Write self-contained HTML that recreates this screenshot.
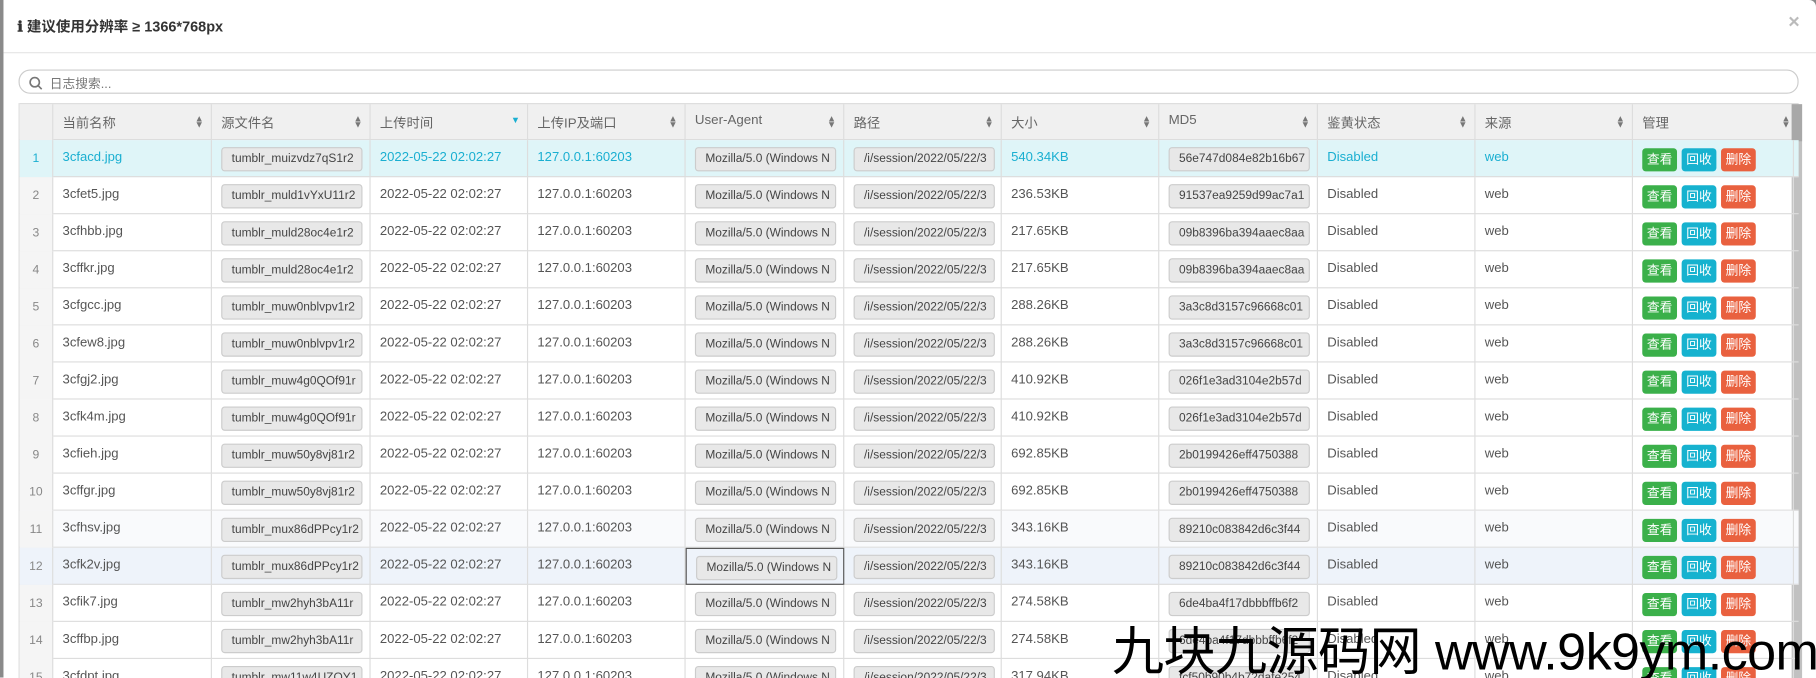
<!DOCTYPE html>
<html><head><meta charset="utf-8">
<style>
*{box-sizing:border-box;margin:0;padding:0}
html,body{width:1816px;height:678px;overflow:hidden;background:#fff}
#w{width:1568px;height:585px;transform:scale(1.15816);transform-origin:0 0;position:relative;font-family:"Liberation Sans","Noto Sans CJK SC",sans-serif;font-size:11.3px;color:#555;background:#8a8a8a}
#m{position:absolute;left:3px;top:0;width:1565px;height:600px;background:#fff;border-radius:0 6px 0 0}
#t{position:absolute;left:12px;top:12px;font-size:12.5px;font-weight:bold;color:#333}
#x{position:absolute;right:14px;top:9px;font-size:17px;color:#bbb;font-weight:bold}
#hr{position:absolute;left:0;right:0;top:45px;border-top:1px solid #e5e5e5}
#s{position:absolute;left:13px;top:60px;width:1537px;height:21px;border:1px solid #ccc;border-radius:10px;background:#fff}
#s span{position:absolute;left:26px;top:3px;color:#777;font-size:11px}
#s svg{position:absolute;left:8px;top:5px}
#tb{position:absolute;left:13px;top:89px;width:1537px;border-left:1px solid #ddd}
.r{position:relative;height:32px;border-bottom:1px solid #ddd;white-space:nowrap;color:#555}
.c{position:absolute;top:0;height:32px;border-right:1px solid #ddd;padding:9px 0 0 8px;overflow:hidden}
.h{background:#f0f0f0;color:#666;border-top:1px solid #ddd}
.h .c{padding-top:8px;font-size:11.5px}
.i{width:29px;left:0;background:#f5f5f5;text-align:center;padding-left:0;color:#888;font-size:10.5px;padding-top:10px}
.h .i{background:#f0f0f0}
.in{display:inline-block;width:122px;height:21px;border:1px solid #ccc;border-radius:3px;background:#e8e8e8;font-size:10.3px;color:#444;padding:4px 0 0 8px;overflow:hidden;margin-top:1px}
.so{position:absolute;right:6px;top:10px;font-size:8px;line-height:5px;color:#777}
.b{display:inline-block;width:30px;height:20px;border-radius:3px;color:#fff;text-align:center;font-size:11px;line-height:20px;margin-right:4px;margin-top:2px}
.g{background:#3bb04a}.bl{background:#16b2cf}.rd{background:#e9613f}
.r.sel{background:#dff5f8;color:#1aafd1}
.sel .i{background:#dff5f8;color:#1aafd1}
#sb{position:absolute;left:1530px;top:0;width:9px;height:500px;background:#c1c1c1}
#sb div{height:32px;background:#a8a8a8}
#wm{position:absolute;left:960px;top:526px;font-size:45px;color:#000;font-family:"Liberation Sans","Noto Sans CJK SC",sans-serif;white-space:nowrap;letter-spacing:-0.5px}
</style></head><body><div id="w"><div id="m">
<div id="t">ℹ 建议使用分辨率 ≥ 1366*768px</div>
<div id="x">×</div>
<div id="hr"></div>
<div id="s"><svg width="12" height="12" viewBox="0 0 12 12"><circle cx="5" cy="5" r="4" fill="none" stroke="#777" stroke-width="1.4"/><path d="M8 8l3 3" stroke="#777" stroke-width="1.4"/></svg><span>日志搜索...</span></div>
<div id="tb"></div>
</div>
<div id="wm">九块九源码网 www.9k9ym.com</div>
</div>
<script>
var cols=["当前名称","源文件名","上传时间","上传IP及端口","User-Agent","路径","大小","MD5","鉴黄状态","来源","管理"];
var L=[29,166,303,439,575,712,848,984,1121,1257,1393,1532];
var d=[["3cfacd","muizvdz7qS1r2","540.34KB","56e747d084e82b16b67"],["3cfet5","muld1vYxU11r2","236.53KB","91537ea9259d99ac7a1"],["3cfhbb","muld28oc4e1r2","217.65KB","09b8396ba394aaec8aa"],["3cffkr","muld28oc4e1r2","217.65KB","09b8396ba394aaec8aa"],["3cfgcc","muw0nblvpv1r2","288.26KB","3a3c8d3157c96668c01"],["3cfew8","muw0nblvpv1r2","288.26KB","3a3c8d3157c96668c01"],["3cfgj2","muw4g0QOf91r","410.92KB","026f1e3ad3104e2b57d"],["3cfk4m","muw4g0QOf91r","410.92KB","026f1e3ad3104e2b57d"],["3cfieh","muw50y8vj81r2","692.85KB","2b0199426eff4750388"],["3cffgr","muw50y8vj81r2","692.85KB","2b0199426eff4750388"],["3cfhsv","mux86dPPcy1r2","343.16KB","89210c083842d6c3f44"],["3cfk2v","mux86dPPcy1r2","343.16KB","89210c083842d6c3f44"],["3cfik7","mw2hyh3bA11r","274.58KB","6de4ba4f17dbbbffb6f2"],["3cffbp","mw2hyh3bA11r","274.58KB","6de4ba4f17dbbbffb6f2"],["3cfdpt","mw11w4UZOY1","317.94KB","fcf50b90b4b72dafe254"]];
function cell(k,html,extra){return '<div class="c" style="left:'+L[k]+'px;width:'+(L[k+1]-L[k])+'px;'+(extra||'')+'">'+html+'</div>';}
var h='<div class="r h"><div class="c i"></div>';
cols.forEach(function(c,k){h+=cell(k,c+(k==10?'<span class="so" style="right:2px">▲<br>▼</span>':k==2?'<span class="so" style="color:#1aafd1;top:11px">▼</span>':'<span class="so">▲<br>▼</span>'));});
h+='<div id="sb"><div></div></div></div>';
d.forEach(function(r,n){
 var cls=n==0?' sel':'';var bg=n==11?'background:#eef3fa;':n==10?'background:#f9fafc;':'';
 h+='<div class="r'+cls+'" style="'+bg+'"><div class="c i" style="'+(n==11?'background:#eef3fa':'')+'">'+(n+1)+'</div>';
 h+=cell(0,r[0]+'.jpg');
 h+=cell(1,'<span class="in">tumblr_'+r[1]+'</span>','padding-top:5px');
 h+=cell(2,'2022-05-22 02:02:27');
 h+=cell(3,'127.0.0.1:60203');
 h+=cell(4,'<span class="in">Mozilla/5.0 (Windows N</span>','padding-top:5px;'+(n==11?'border:1px solid #555;':''));
 h+=cell(5,'<span class="in">/i/session/2022/05/22/3</span>','padding-top:5px');
 h+=cell(6,r[2]);
 h+=cell(7,'<span class="in">'+r[3]+'</span>','padding-top:5px');
 h+=cell(8,'Disabled');
 h+=cell(9,'web');
 h+=cell(10,'<span class="b g">查看</span><span class="b bl">回收</span><span class="b rd">删除</span>','padding-top:5px');
 h+='</div>';
});
document.getElementById('tb').innerHTML=h;
</script>
</body></html>
